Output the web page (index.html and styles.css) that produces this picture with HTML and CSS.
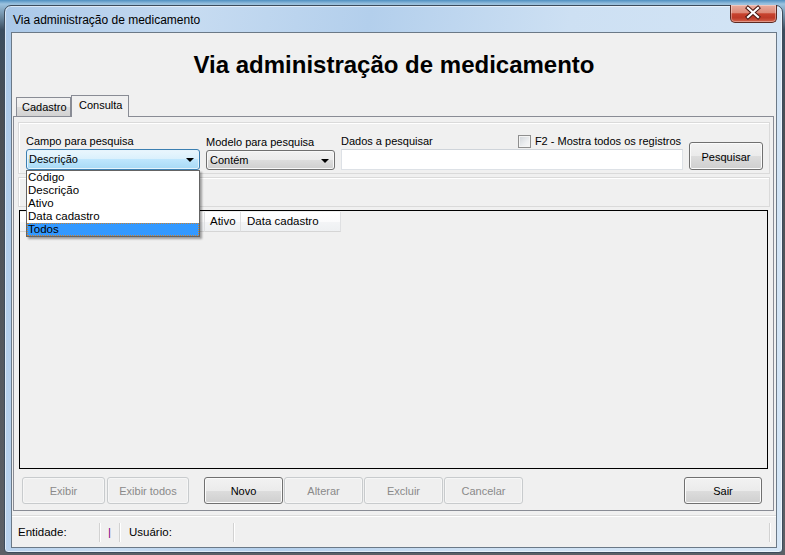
FILE: index.html
```html
<!DOCTYPE html>
<html lang="pt-BR">
<head>
  <meta charset="UTF-8" />
  <title>Via administração de medicamento</title>
  <link rel="stylesheet" href="styles.css">
</head>
<body>
  <div class="window">
    <div class="titlebar">
      <span class="title">Via administração de medicamento</span>
      <div class="close-btn">
        <svg width="45" height="17" viewBox="0 0 45 17">
          <path d="M17 3 L27 12 M27 3 L17 12" stroke="#4a1a14" stroke-width="4.2" stroke-linecap="square" fill="none"/>
          <path d="M17 3 L27 12 M27 3 L17 12" stroke="#ffffff" stroke-width="2.2" stroke-linecap="square" fill="none"/>
        </svg>
      </div>
    </div>

    <div class="client">
      <h1 class="heading">Via administração de medicamento</h1>

      <div class="tabs">
        <div class="tab">Cadastro</div>
        <div class="tab active">Consulta</div>
      </div>

      <div class="tabpage">
        <div class="panel search-panel">
          <div class="field campo">
            <label class="lbl">Campo para pesquisa</label>
            <div class="combo focused">Descrição<span class="arrow"></span></div>
            <ul class="dropdown">
              <li>Código</li>
              <li>Descrição</li>
              <li>Ativo</li>
              <li>Data cadastro</li>
              <li class="selected">Todos</li>
            </ul>
          </div>
          <div class="field modelo">
            <label class="lbl">Modelo para pesquisa</label>
            <div class="combo">Contém<span class="arrow"></span></div>
          </div>
          <div class="field dados">
            <div class="dados-head">
              <label class="lbl">Dados a pesquisar</label>
              <label class="check"><span class="box"></span>F2 - Mostra todos os registros</label>
            </div>
            <input class="text-input" type="text">
          </div>
          <button class="btn btn-search">Pesquisar</button>
        </div>

        <div class="panel info-panel"></div>

        <div class="grid">
          <!-- first two columns sit under the open dropdown -->
          <div class="grid-header">
            <div class="col col-cod"></div>
            <div class="col col-desc"></div>
            <div class="col col-ativo">Ativo</div>
            <div class="col col-data">Data cadastro</div>
          </div>
        </div>

        <div class="actions">
          <button class="btn disabled w83">Exibir</button>
          <button class="btn disabled w82 ml2">Exibir todos</button>
          <button class="btn w79 ml15">Novo</button>
          <button class="btn disabled w79 ml1">Alterar</button>
          <button class="btn disabled w79 ml1">Excluir</button>
          <button class="btn disabled w79 ml1">Cancelar</button>
          <button class="btn w78 push">Sair</button>
        </div>
      </div>

      <div class="statusbar">
        <div class="status-item st-ent">Entidade:</div>
        <div class="status-item st-bar"><span class="purple">|</span></div>
        <div class="status-item st-user">Usuário:</div>
        <div class="status-item st-rest"></div>
      </div>
    </div>
  </div>
</body>
</html>
```

FILE: styles.css
```css
body {
  margin: 0;
  width: 785px;
  height: 555px;
  overflow: hidden;
  font-family: "Liberation Sans", Arial, sans-serif;
  font-size: 11px;
  color: #000;
  background: linear-gradient(180deg, #4f8fc0 0, #9cc3e0 4px, #3b4d5e 30px, #4a4f55 120px, #5c6066 100%);
}
.window {
  position: relative;
  box-sizing: border-box;
  margin: 5px 0 0 4px;
  width: 779px;
  height: 548px;
  border: 1px solid #3d4c5c;
  border-radius: 7px 7px 4px 4px;
  padding: 0 5px 4px 6px;
  display: flex;
  flex-direction: column;
  background: linear-gradient(100deg, #aac8e8 0%, #c6dbf1 22%, #b3cfec 42%, #cde0f3 65%, #d5e6f6 100%);
  box-shadow: inset 0 0 0 1px rgba(255,255,255,0.55);
}
.titlebar {
  height: 26px;
  display: flex;
  align-items: center;
}
.title {
  font-size: 12px;
  padding: 1px 0 0 2px;
  color: #000;
}
.close-btn {
  position: absolute;
  top: -1px;
  right: 5px;
  width: 45px;
  height: 17px;
  border: 1px solid #5c2a22;
  border-top: none;
  border-radius: 0 0 5px 5px;
  background: linear-gradient(180deg, #e9ab9d 0%, #dd8a78 45%, #c7432e 52%, #bd3a27 75%, #d4644c 100%);
  box-shadow: inset 0 0 0 1px rgba(255,255,255,0.35);
}
.close-btn svg {
  display: block;
}
.client {
  flex: 1;
  display: flex;
  flex-direction: column;
  background: #f0f0f0;
  border: 1px solid #6b7987;
}
.heading {
  margin: 0;
  height: 62px;
  padding-top: 1px;
  box-sizing: border-box;
  display: flex;
  align-items: center;
  justify-content: center;
  font-size: 24px;
  font-weight: bold;
}
.tabs {
  height: 21px;
  display: flex;
  align-items: flex-end;
  padding-left: 4px;
}
.tab {
  box-sizing: border-box;
  height: 19px;
  width: 55px;
  border: 1px solid #898c95;
  border-bottom: none;
  padding: 3px 0 0 5px;
  background: linear-gradient(180deg, #f2f2f2 0%, #ebebeb 50%, #dddddd 50%, #d2d2d2 100%);
}
.tab.active {
  position: relative;
  z-index: 1;
  width: 58px;
  height: 22px;
  margin-bottom: -1px;
  padding: 3px 0 0 7px;
  background: #f0f0f0;
}
.tabpage {
  box-sizing: border-box;
  height: 395px;
  margin: 0 2px 0 1px;
  border: 1px solid #898c95;
  background: #f0f0f0;
  display: flex;
  flex-direction: column;
  padding: 5px 3px 0 4px;
}
.panel {
  box-sizing: border-box;
  border: 1px solid #dadada;
  box-shadow: inset 1px 1px 0 #fff;
}
.search-panel {
  height: 52px;
  display: flex;
  align-items: flex-end;
  gap: 6px;
  padding: 0 6px 3px 7px;
}
.field {
  display: flex;
  flex-direction: column;
}
.lbl {
  line-height: 14px;
  margin-bottom: 1px;
  white-space: nowrap;
}
.campo {
  position: relative;
  width: 174px;
}
.modelo {
  width: 129px;
}
.dados {
  width: 342px;
}
.combo {
  position: relative;
  box-sizing: border-box;
  height: 21px;
  line-height: 19px;
  padding-left: 3px;
  border: 1px solid #707070;
  border-radius: 3px;
  background: linear-gradient(180deg, #f2f2f2 0%, #ebebeb 50%, #dddddd 50%, #cfcfcf 100%);
  box-shadow: inset 0 0 0 1px #f8f8f8;
}
.combo.focused {
  padding-left: 2px;
  border-color: #3c7fb1;
  background: linear-gradient(180deg, #eaf6fd 0%, #d9f0fc 50%, #bee6fd 50%, #a7d9f5 100%);
  box-shadow: inset 0 0 0 1px #e6f4fc;
}
.modelo .combo {
  height: 20px;
  line-height: 18px;
}
.arrow {
  position: absolute;
  right: 5px;
  top: 8px;
  width: 0;
  height: 0;
  border-left: 4px solid transparent;
  border-right: 4px solid transparent;
  border-top: 4px solid #000;
}
.dropdown {
  position: absolute;
  top: 100%;
  left: 0;
  z-index: 5;
  box-sizing: border-box;
  width: 174px;
  height: 67px;
  margin: 0;
  padding: 0;
  list-style: none;
  background: #fff;
  border: 1px solid #646464;
  box-shadow: 2px 2px 2px rgba(0,0,0,0.35);
}
.dropdown li {
  height: 13px;
  line-height: 13px;
  padding-left: 1px;
  font-size: 11.5px;
  box-sizing: border-box;
}
.dropdown li.selected {
  background: #3399ff;
  border: 1px dotted #c98334;
  line-height: 11px;
  padding-left: 0;
}
.dados-head {
  display: flex;
  justify-content: space-between;
  align-items: flex-end;
}
.check {
  display: flex;
  align-items: center;
  padding-right: 2px;
  line-height: 14px;
  margin-bottom: 1px;
  white-space: nowrap;
}
.box {
  box-sizing: border-box;
  width: 13px;
  height: 13px;
  margin-right: 4px;
  border: 1px solid #8f8f8f;
  background: linear-gradient(135deg, #d0d4d9 0%, #eceef0 60%, #f8f8f8 100%);
  box-shadow: inset 0 0 0 1px #f4f4f4;
}
.text-input {
  box-sizing: border-box;
  height: 21px;
  width: 100%;
  margin: 0;
  border: 1px solid #dde1e6;
  border-top-color: #cfd4da;
  background: #fff;
  outline: none;
}
.btn {
  box-sizing: border-box;
  height: 27px;
  margin: 0;
  padding: 0;
  font-family: "Liberation Sans", Arial, sans-serif;
  font-size: 11px;
  color: #000;
  border: 1px solid #707070;
  border-radius: 3px;
  background: linear-gradient(180deg, #f2f2f2 0%, #ebebeb 50%, #dddddd 50%, #cfcfcf 100%);
  box-shadow: inset 0 0 0 1px #fbfbfb;
}
.btn.disabled {
  color: #8a8a8a;
  border-color: #c8cbcd;
  background: #efefef;
  box-shadow: inset 0 0 0 1px #f6f6f6;
}
.btn-search {
  width: 74px;
  height: 28px;
  padding-top: 2px;
}
.info-panel {
  height: 30px;
  margin-top: 3px;
}
.grid {
  box-sizing: border-box;
  height: 259px;
  margin: 3px 2px 0 1px;
  border: 1px solid #000;
  background: #f0f0f0;
}
.grid-header {
  display: flex;
  height: 20px;
  margin-top: 1px;
}
.col {
  box-sizing: border-box;
  height: 20px;
  line-height: 19px;
  padding-left: 5px;
  font-size: 11.5px;
  white-space: nowrap;
  background: linear-gradient(180deg, #ffffff 0%, #fbfbfc 50%, #f3f4f6 55%, #eef0f2 100%);
  border-right: 1px solid #dfe0e2;
  border-bottom: 1px solid #d5d5d5;
}
.col-cod { width: 55px; }
.col-desc { width: 130px; }
.col-ativo { width: 36px; }
.col-data { width: 100px; padding-left: 6px; }
.actions {
  display: flex;
  margin-top: 8px;
  padding: 0 8px 0 4px;
}
.w83 { width: 83px; }
.w82 { width: 82px; }
.w79 { width: 79px; }
.w78 { width: 78px; }
.ml1 { margin-left: 1px; }
.ml2 { margin-left: 2px; }
.ml15 { margin-left: 15px; }
.push { margin-left: auto; }
.statusbar {
  flex: 1;
  display: flex;
  align-items: center;
  margin-top: 4px;
  border-top: 1px solid #dcdcdc;
  box-shadow: inset 0 1px 0 #fff;
  font-size: 11.5px;
  padding-top: 1px;
}
.status-item {
  box-sizing: border-box;
  height: 19px;
  line-height: 18px;
  border-right: 1px solid #d2d2d2;
  box-shadow: 1px 0 0 #fff;
}
.st-ent { width: 88px; padding-left: 6px; }
.st-bar { width: 20px; text-align: center; }
.st-user { width: 114px; padding-left: 9px; }
.st-rest { width: 536px; }
.purple { color: #800080; }
```
